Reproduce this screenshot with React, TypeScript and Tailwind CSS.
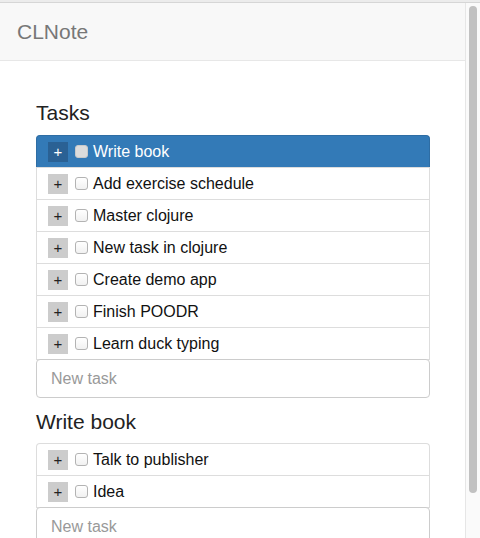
import React from "react";

const tasks = [
  "Write book",
  "Add exercise schedule",
  "Master clojure",
  "New task in clojure",
  "Create demo app",
  "Finish POODR",
  "Learn duck typing",
];

const sub = ["Talk to publisher", "Idea"];

function Row({ text, active, first }: { text: string; active?: boolean; first?: boolean }) {
  return (
    <div
      className={
        "h-[32px] flex items-center pl-[11px] border-x border-t " +
        (first ? "rounded-t-[4px] " : "") +
        (active ? "bg-[#337ab7] border-[#2e6da4] text-white" : "bg-white border-[#dddddd] text-[#111]")
      }
    >
      <div
        className={
          "w-[20px] h-[20px] flex items-center justify-center text-[15px] leading-none " +
          (active ? "bg-[#2a6194] text-white" : "bg-[#cccccc] text-[#222]")
        }
      >
        +
      </div>
      <div
        className={
          "ml-[7px] w-[13px] h-[13px] rounded-[3px] border " +
          (active ? "bg-[#dcdcdc] border-[#c9c9c9]" : "bg-gradient-to-b from-white to-[#f1f1f1] border-[#b3b3b3]")
        }
      />
      <span className="ml-[5px] text-[16px] leading-none">{text}</span>
    </div>
  );
}

function NewTask() {
  return (
    <div className="h-[39px] -mt-px border border-[#cccccc] rounded-[4px] flex items-center pl-[14px] text-[16px] text-[#999] bg-white">
      New task
    </div>
  );
}

export default function App() {
  return (
    <div className="w-[480px] h-[538px] overflow-hidden bg-white font-['Liberation_Sans','Helvetica',sans-serif] flex flex-col">
      <div className="h-[3px] bg-[#ececec] border-b border-[#d6d6d6] shrink-0" />
      <div className="flex flex-1 min-h-0">
        <div className="flex-1 flex flex-col">
          <nav className="h-[58px] bg-[#f8f8f8] border-b border-[#e7e7e7] flex items-center pl-[17px] shrink-0">
            <span className="text-[21px] text-[#777] leading-none">CLNote</span>
          </nav>
          <main className="pl-[36px] pr-[35px]">
            <h3 className="mt-[40px] mb-[10px] text-[21px] leading-[24px] text-[#222]">Tasks</h3>
            <div>
              {tasks.map((t, i) => (
                <Row key={t} text={t} active={i === 0} first={i === 0} />
              ))}
              <div className="border-t border-[#dddddd]" />
              <NewTask />
            </div>
            <h3 className="mt-[12px] mb-[9px] text-[21px] leading-[24px] text-[#222]">Write book</h3>
            <div>
              {sub.map((t, i) => (
                <Row key={t} text={t} first={i === 0} />
              ))}
              <div className="border-t border-[#dddddd]" />
              <NewTask />
            </div>
          </main>
        </div>
        <div className="w-[15px] shrink-0 bg-[#fafafa] border-l border-[#e6e6e6] relative">
          <div className="absolute left-[3px] top-[3px] w-[8px] h-[487px] rounded-full bg-[#c1c1c1]" />
        </div>
      </div>
    </div>
  );
}
